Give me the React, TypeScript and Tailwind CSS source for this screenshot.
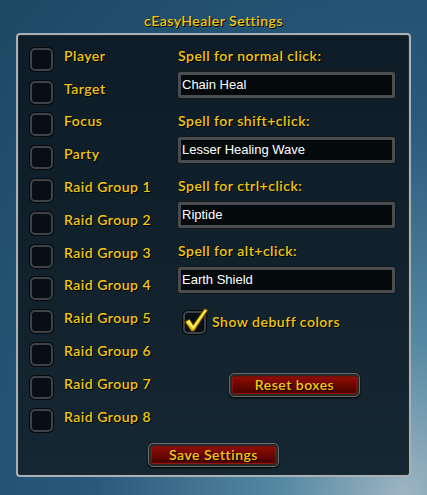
import React from 'react';

const groups = [
  'Player',
  'Target',
  'Focus',
  'Party',
  'Raid Group 1',
  'Raid Group 2',
  'Raid Group 3',
  'Raid Group 4',
  'Raid Group 5',
  'Raid Group 6',
  'Raid Group 7',
  'Raid Group 8',
];

const spells = [
  { label: 'Spell for normal click:', value: 'Chain Heal' },
  { label: 'Spell for shift+click:', value: 'Lesser Healing Wave' },
  { label: 'Spell for ctrl+click:', value: 'Riptide' },
  { label: 'Spell for alt+click:', value: 'Earth Shield' },
];

const gold = "text-[#f2c511] [text-shadow:1px_1px_0_#000] font-['Lato',sans-serif] font-semibold text-[14px] tracking-[0.5px] leading-none";

function Box({ checked = false }: { checked?: boolean }) {
  return (
    <div className="relative w-[23px] h-[23px] shrink-0 rounded-[5px] border-2 border-[#3d4346] bg-[#070f14] shadow-[0_0_0_1px_#05090c]">
      {checked && (
        <svg viewBox="0 0 30 30" className="absolute -left-[3px] -top-[7px] w-[28px] h-[28px]">
          <path
            d="M3 17 L8 14 L12 20 L24 3 L28 4 L13 27 L10 27 Z"
            fill="#e0b400"
            stroke="#4a3600"
            strokeWidth="1"
          />
          <path d="M5 17 L8 15 L12 22 L25 4 L26 5 L12 25 Z" fill="#fff06a" />
        </svg>
      )}
    </div>
  );
}

function RedButton({ children }: { children: React.ReactNode }) {
  return (
    <div className="w-[131px] h-[24px] rounded-[5px] p-[2px] bg-[#2a2a2a] border border-[#6b6b6b] shadow-[0_1px_2px_#000]">
      <div className="w-full h-full rounded-[3px] bg-gradient-to-b from-[#8e0c06] via-[#6e0603] to-[#4a0200] flex items-center justify-center border border-[#b0251a]/40">
        <span className={gold}>{children}</span>
      </div>
    </div>
  );
}

export default function App() {
  return (
    <div className="w-[427px] h-[495px] bg-[radial-gradient(ellipse_at_95%_100%,#9db5c2_0%,#5588a2_22%,#28587a_55%,#1d4864_100%)] flex flex-col">
      <div className="h-[33px] flex items-center justify-center pt-[9px]">
        <span className={gold}>cEasyHealer Settings</span>
      </div>

      <div className="mx-[16px] h-[444px] rounded-[4px] border-2 border-[#a9b1b6] shadow-[inset_0_0_0_1px_#1a2a33] bg-gradient-to-b from-[#0d1c26] to-[#152732] flex flex-col">
        <div className="flex pt-[8px]">
          {/* Left column: unit checkboxes */}
          <div className="w-[160px] pl-[12px] flex flex-col">
            {groups.map((g) => (
              <div key={g} className="h-[32.8px] flex items-center gap-[11px]">
                <Box />
                <span className={`${gold} mb-[7px]`}>{g}</span>
              </div>
            ))}
          </div>

          {/* Right column: spell inputs */}
          <div className="flex-1 pr-[14px] flex flex-col">
            {spells.map((s) => (
              <div key={s.label} className="h-[65px] flex flex-col">
                <div className="h-[29px] flex items-center pb-[4px]">
                  <span className={gold}>{s.label}</span>
                </div>
                <div className="h-[26px] rounded-[2px] border-[3px] border-[#4a4d4f] bg-[#04090c] flex items-center pl-[1px] shadow-[0_0_0_1px_#151819]">
                  <span className="text-white font-['Liberation_Sans',Arial,sans-serif] text-[13px]">
                    {s.value}
                  </span>
                </div>
              </div>
            ))}
            <div className="flex items-center gap-[6px] pl-[5px] mt-[8px]">
              <Box checked />
              <span className={`${gold} mb-[2px]`}>Show debuff colors</span>
            </div>
            <div className="flex justify-center pl-[16px] mt-[39px]">
              <RedButton>Reset boxes</RedButton>
            </div>
          </div>
        </div>

        <div className="flex justify-center mt-[6px]">
          <RedButton>Save Settings</RedButton>
        </div>
      </div>
    </div>
  );
}
